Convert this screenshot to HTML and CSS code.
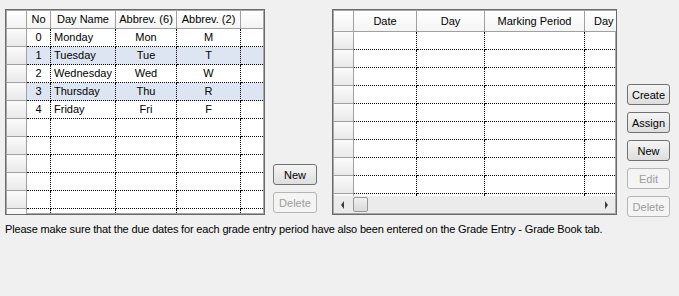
FILE: index.html
```html
<!DOCTYPE html>
<html lang="en">
<head>
  <meta charset="UTF-8">
  <title>Days and Grade Entry Periods</title>
  <link rel="stylesheet" href="styles.css">
</head>
<body>
  <div class="window">
    <div class="panels">
      <!-- days of the week -->
      <div class="grid grid-days">
        <div class="row head">
          <div class="rh"></div><div>No</div><div>Day Name</div><div>Abbrev. (6)</div><div>Abbrev. (2)</div><div></div>
        </div>
        <div class="row">
          <div class="rh"></div><div class="c">0</div><div>Monday</div><div class="c">Mon</div><div class="c">M</div><div></div>
        </div>
        <div class="row alt">
          <div class="rh"></div><div class="c">1</div><div>Tuesday</div><div class="c">Tue</div><div class="c">T</div><div></div>
        </div>
        <div class="row">
          <div class="rh"></div><div class="c">2</div><div>Wednesday</div><div class="c">Wed</div><div class="c">W</div><div></div>
        </div>
        <div class="row alt">
          <div class="rh"></div><div class="c">3</div><div>Thursday</div><div class="c">Thu</div><div class="c">R</div><div></div>
        </div>
        <div class="row">
          <div class="rh"></div><div class="c">4</div><div>Friday</div><div class="c">Fri</div><div class="c">F</div><div></div>
        </div>
        <div class="row"><div class="rh"></div><div></div><div></div><div></div><div></div><div></div></div>
        <div class="row"><div class="rh"></div><div></div><div></div><div></div><div></div><div></div></div>
        <div class="row"><div class="rh"></div><div></div><div></div><div></div><div></div><div></div></div>
        <div class="row"><div class="rh"></div><div></div><div></div><div></div><div></div><div></div></div>
        <div class="row"><div class="rh"></div><div></div><div></div><div></div><div></div><div></div></div>
        <div class="row"><div class="rh"></div><div></div><div></div><div></div><div></div><div></div></div>
      </div>

      <div class="btns btns-days">
        <button>New</button>
        <button disabled>Delete</button>
      </div>

      <!-- grade entry periods -->
      <div class="grid grid-dates">
        <div class="row head">
          <div class="rh"></div><div>Date</div><div>Day</div><div>Marking Period</div><div class="cut">Day</div>
        </div>
        <div class="grid-body">
          <div class="row"><div class="rh"></div><div></div><div></div><div></div><div></div></div>
          <div class="row"><div class="rh"></div><div></div><div></div><div></div><div></div></div>
          <div class="row"><div class="rh"></div><div></div><div></div><div></div><div></div></div>
          <div class="row"><div class="rh"></div><div></div><div></div><div></div><div></div></div>
          <div class="row"><div class="rh"></div><div></div><div></div><div></div><div></div></div>
          <div class="row"><div class="rh"></div><div></div><div></div><div></div><div></div></div>
          <div class="row"><div class="rh"></div><div></div><div></div><div></div><div></div></div>
          <div class="row"><div class="rh"></div><div></div><div></div><div></div><div></div></div>
          <div class="row"><div class="rh"></div><div></div><div></div><div></div><div></div></div>
          <div class="row"><div class="rh"></div><div></div><div></div><div></div><div></div></div>
        </div>
        <div class="hscroll">
          <span class="arrow arrow-left"></span>
          <span class="thumb"></span>
          <span class="track"></span>
          <span class="arrow arrow-right"></span>
        </div>
      </div>

      <div class="btns btns-dates">
        <button>Create</button>
        <button>Assign</button>
        <button>New</button>
        <button disabled>Edit</button>
        <button disabled>Delete</button>
      </div>
    </div>

    <p class="note">Please make sure that the due dates for each grade entry period have also been entered on the Grade Entry - Grade Book tab.</p>
  </div>
</body>
</html>
```

FILE: styles.css
```css
body {
  margin: 0;
  background-color: #f0f0f0;
  font-family: "Liberation Sans", Arial, sans-serif;
  font-size: 11px;
  color: #000;
}
.window {
  padding: 9px 0 0 5px;
}
.panels {
  display: flex;
  align-items: flex-start;
}

/* grids */
.grid {
  box-sizing: border-box;
  height: 206px;
  padding: 1px;
  border: 1px solid #6a6a6a;
  box-shadow: inset 0 0 0 1px #a8a8a8;
  background-color: #fff;
  overflow: hidden;
}
.grid-days {
  width: 260px;
}
.grid-dates {
  width: 285px;
  display: flex;
  flex-direction: column;
}
.row {
  display: grid;
  height: 18px;
}
.grid-days .row {
  grid-template-columns: 20px 24px 65px 61px 64px 22px;
}
.grid-dates .row {
  grid-template-columns: 20px 63px 68px 100px 60px;
}
.row > div {
  box-sizing: border-box;
  padding: 0 3px;
  line-height: 17px;
  white-space: nowrap;
  overflow: hidden;
  border-right: 1px dotted #000;
  border-bottom: 1px dotted #000;
}
.grid-days .row > div:last-child {
  border-right: none;
}
.row > .c {
  text-align: center;
}
.row.alt > div {
  background-color: #dde5f2;
}
.row > .rh,
.row.alt > .rh {
  border-right: 1px solid #a0a0a0;
  border-bottom: 1px solid #a0a0a0;
  background: linear-gradient(#fbfbfb, #e9e9e9);
}
.row.head > div {
  text-align: center;
  border-right: 1px solid #a0a0a0;
  border-bottom: 1px solid #a0a0a0;
  background: linear-gradient(#ffffff, #f4f4f4);
}
.grid-days .row.head > div:last-child {
  border-right: none;
}
.row.head > .rh {
  background: linear-gradient(#ffffff, #f2f2f2);
}
.row.head > .cut {
  text-align: left;
  padding-left: 9px;
}
.grid-dates .row.head {
  height: 21px;
}
.grid-dates .row.head > div {
  line-height: 20px;
}
.grid-body {
  height: 164px;
  overflow: hidden;
}

/* horizontal scrollbar */
.hscroll {
  display: flex;
  align-items: center;
  height: 17px;
  background-color: #ebebeb;
}
.arrow {
  width: 17px;
  height: 17px;
  position: relative;
}
.arrow::after {
  content: "";
  position: absolute;
  top: 5px;
  border-top: 4px solid transparent;
  border-bottom: 4px solid transparent;
}
.arrow-left::after {
  left: 7px;
  border-right: 3px solid #3c3c3c;
}
.arrow-right::after {
  left: 7px;
  border-left: 3px solid #3c3c3c;
}
.thumb {
  box-sizing: border-box;
  width: 15px;
  height: 15px;
  margin-left: 2px;
  border: 1px solid #979797;
  border-radius: 2px;
  background: linear-gradient(#f0f0f0, #dadada);
}
.track {
  flex: 1;
}

/* buttons */
.btns {
  box-sizing: border-box;
  display: flex;
  flex-direction: column;
  gap: 7px;
}
.btns-days {
  height: 206px;
  justify-content: flex-end;
  padding-bottom: 2px;
  margin: 0 15px 0 8px;
}
.btns-dates {
  padding-top: 75px;
  margin-left: 10px;
}
button {
  width: 44px;
  height: 21px;
  padding: 0;
  font-family: "Liberation Sans", Arial, sans-serif;
  font-size: 11px;
  color: #000;
  border: 1px solid #707070;
  border-radius: 3px;
  background: linear-gradient(#f5f5f5, #dedede);
}
.btns-dates button {
  width: 43px;
}
button:disabled {
  color: #9c9c9c;
  border-color: #b5b5b5;
  background: #f4f4f4;
}

.note {
  margin: 6px 0 0;
  letter-spacing: -0.17px;
}
```
